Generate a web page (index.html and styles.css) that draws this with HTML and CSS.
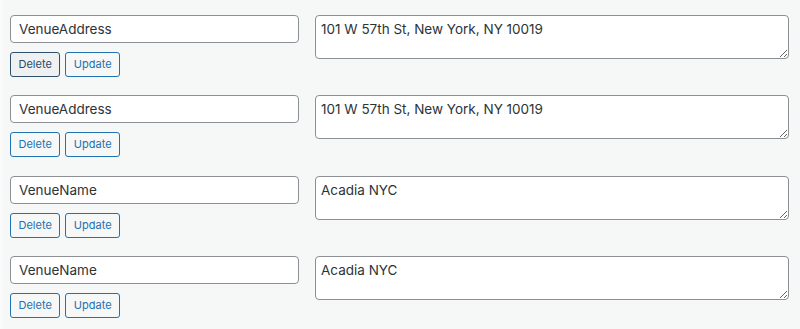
FILE: index.html
```html
<!DOCTYPE html>
<html lang="en">
<head>
<meta charset="utf-8">
<title>Custom Fields</title>
<link rel="stylesheet" href="styles.css">
</head>
<body>
<div class="meta-list">
  <div class="meta-row">
    <div class="meta-key">
      <input class="key-input" type="text" value="VenueAddress">
      <div class="actions">
        <button class="btn btn-active">Delete</button>
        <button class="btn">Update</button>
      </div>
    </div>
    <textarea class="value-input">101 W 57th St, New York, NY 10019</textarea>
  </div>
  <div class="meta-row">
    <div class="meta-key">
      <input class="key-input" type="text" value="VenueAddress">
      <div class="actions">
        <button class="btn">Delete</button>
        <button class="btn">Update</button>
      </div>
    </div>
    <textarea class="value-input">101 W 57th St, New York, NY 10019</textarea>
  </div>
  <div class="meta-row">
    <div class="meta-key">
      <input class="key-input" type="text" value="VenueName">
      <div class="actions">
        <button class="btn">Delete</button>
        <button class="btn">Update</button>
      </div>
    </div>
    <textarea class="value-input">Acadia NYC</textarea>
  </div>
  <div class="meta-row">
    <div class="meta-key">
      <input class="key-input" type="text" value="VenueName">
      <div class="actions">
        <button class="btn">Delete</button>
        <button class="btn">Update</button>
      </div>
    </div>
    <textarea class="value-input">Acadia NYC</textarea>
  </div>
</div>
</body>
</html>
```

FILE: styles.css
```css
html, body {
  margin: 0;
  padding: 0;
  background: #f6f7f7;
}

body {
  font-family: Inter, "Liberation Sans", sans-serif;
  color: #2c3338;
  border-left: 3px solid #fafafa;
  min-height: 329px;
  box-sizing: border-box;
}

.meta-list {
  display: flex;
  flex-direction: column;
  gap: 18.3px;
  padding: 15px 11px 0 7px;
}

.meta-row {
  display: flex;
  align-items: flex-start;
  gap: 16px;
}

.meta-key {
  width: 289px;
  flex: none;
  display: flex;
  flex-direction: column;
  gap: 9px;
}

.key-input {
  box-sizing: border-box;
  width: 289px;
  height: 28px;
  margin: 0;
  padding: 0 8px;
  border: 1px solid #8c8f94;
  border-radius: 4px;
  background: #fff;
  color: #2c3338;
  font-family: inherit;
  font-size: 13.5px;
  line-height: 26px;
  outline: none;
}

.actions {
  display: flex;
  gap: 5px;
}

.btn {
  box-sizing: border-box;
  height: 25px;
  margin: 0;
  padding: 0 7.5px;
  border: 1px solid #2271b1;
  border-radius: 3px;
  background: #f6f7f7;
  color: #2271b1;
  font-family: inherit;
  font-size: 11px;
  line-height: 23px;
  cursor: pointer;
}

.btn-active {
  background: #eef0f1;
  border-color: #2f4f6b;
  color: #2a4a67;
}

.value-input {
  box-sizing: border-box;
  width: 474px;
  height: 44px;
  margin: 0;
  padding: 3px 5px;
  border: 1px solid #8c8f94;
  border-radius: 4px;
  background: #fff;
  color: #2c3338;
  font-family: inherit;
  font-size: 13.5px;
  line-height: 20px;
  resize: vertical;
  outline: none;
}
```
